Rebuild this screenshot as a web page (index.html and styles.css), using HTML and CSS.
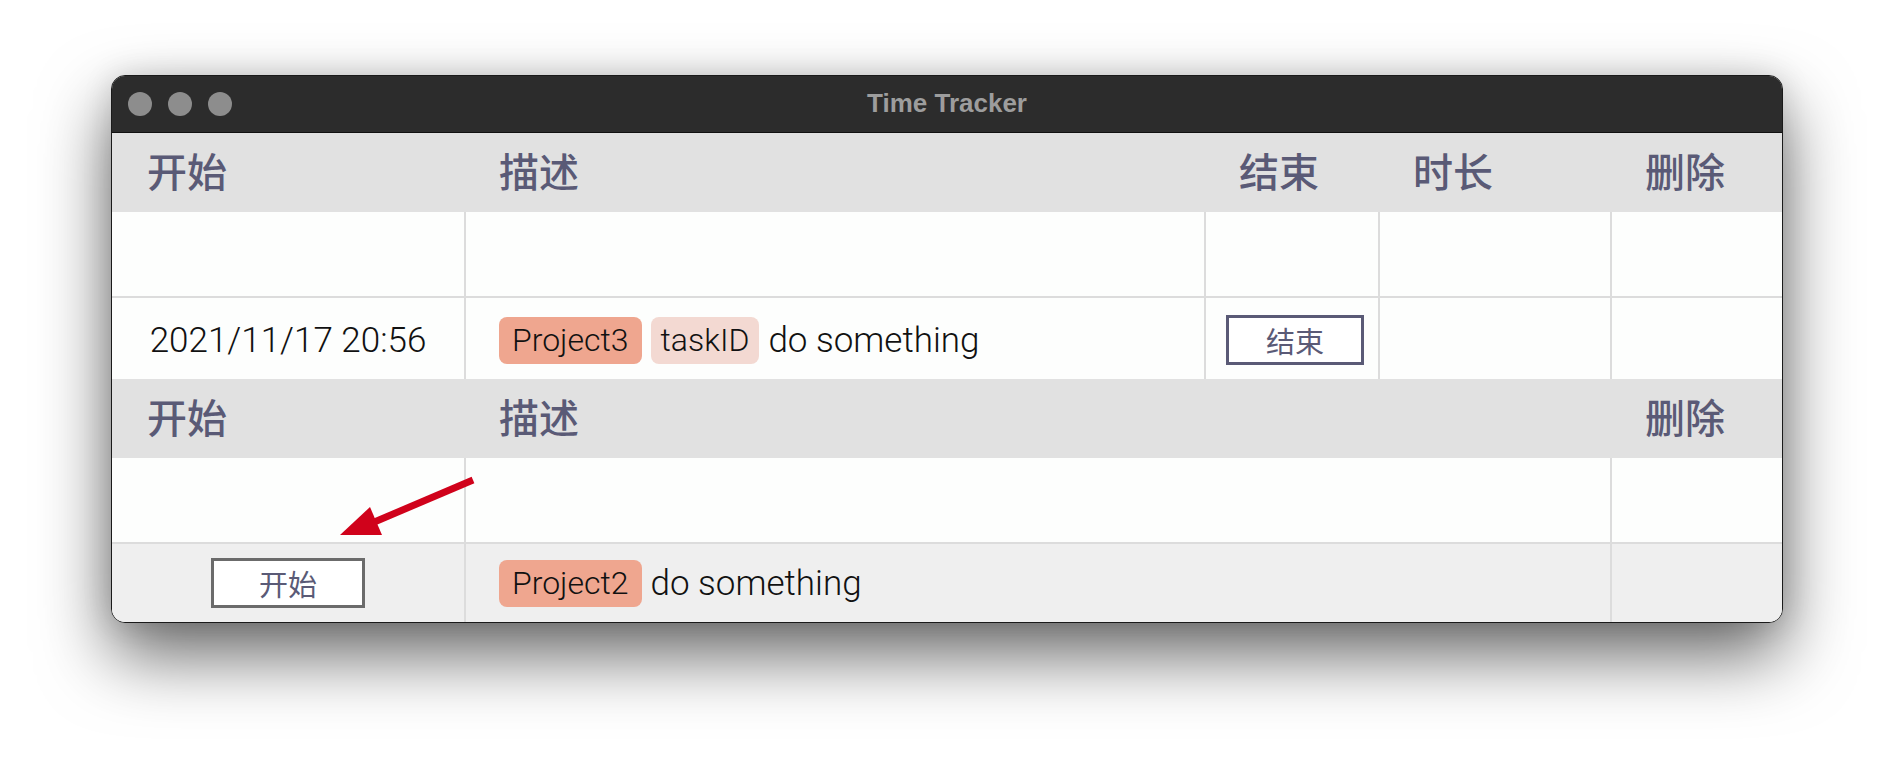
FILE: index.html
```html
<!DOCTYPE html>
<html lang="zh">
<head>
  <meta charset="UTF-8" />
  <title>Time Tracker</title>
  <link rel="stylesheet" href="styles.css">
</head>
<body>
  <div class="stage">
    <div class="window">
      <div class="titlebar">
        <div class="lights">
          <span class="light"></span>
          <span class="light"></span>
          <span class="light"></span>
        </div>
        <div class="title">Time Tracker</div>
        <div></div>
      </div>

      <!-- running tasks -->
      <div class="table running">
        <div class="row head">
          <div class="cell">开始</div>
          <div class="cell">描述</div>
          <div class="cell">结束</div>
          <div class="cell">时长</div>
          <div class="cell">删除</div>
        </div>
        <div class="row empty lined">
          <div class="cell"></div>
          <div class="cell"></div>
          <div class="cell"></div>
          <div class="cell"></div>
          <div class="cell"></div>
        </div>
        <div class="row item">
          <div class="cell center date">2021/11/17 20:56</div>
          <div class="cell desc">
            <span class="tag project">Project3</span>
            <span class="tag task">taskID</span>
            <span class="text">do something</span>
          </div>
          <div class="cell center"><button class="btn btn-stop">结束</button></div>
          <div class="cell"></div>
          <div class="cell"></div>
        </div>
      </div>

      <!-- planned tasks -->
      <div class="table planned">
        <div class="row head">
          <div class="cell">开始</div>
          <div class="cell">描述</div>
          <div class="cell">删除</div>
        </div>
        <div class="row empty lined">
          <div class="cell"></div>
          <div class="cell"></div>
          <div class="cell"></div>
        </div>
        <div class="row item last">
          <div class="cell center"><button class="btn btn-start">开始</button></div>
          <div class="cell desc">
            <span class="tag project">Project2</span>
            <span class="text">do something</span>
          </div>
          <div class="cell"></div>
        </div>
      </div>

      <svg class="arrow" width="150" height="72" viewBox="0 0 150 72">
        <line x1="141" y1="9" x2="40" y2="52" stroke="#d0021b" stroke-width="7" />
        <polygon points="8,64 38,36 50,64" fill="#d0021b" />
      </svg>
    </div>
  </div>
</body>
</html>
```

FILE: styles.css
```css
* {
  margin: 0;
  padding: 0;
  box-sizing: border-box;
}

html, body {
  overflow: hidden;
}

body {
  background: #ffffff;
  font-family: 'Roboto', 'Noto Sans CJK SC', sans-serif;
  color: #111;
  height: 770px;
}

.stage {
  padding: 75px 0 0 111px;
}

.window {
  position: relative;
  width: 1672px;
  border: 1px solid #1a1a1a;
  border-radius: 14px;
  overflow: hidden;
  background: #fdfefd;
  box-shadow: 0 32px 70px rgba(0, 0, 0, 0.6), 0 0 30px rgba(0, 0, 0, 0.12);
}

.titlebar {
  display: grid;
  grid-template-columns: 1fr auto 1fr;
  align-items: center;
  height: 57px;
  background: #2c2c2c;
  border-bottom: 1px solid #111;
}

.lights {
  display: flex;
  gap: 16px;
  padding-left: 16px;
}

.light {
  width: 24px;
  height: 24px;
  border-radius: 50%;
  background: #8d8d8d;
}

.title {
  font-family: 'Liberation Sans', sans-serif;
  font-weight: bold;
  font-size: 26px;
  color: #9d9d9d;
  padding-bottom: 2px;
}

.row {
  display: grid;
}

.running .row {
  grid-template-columns: 354px 740px 174px 232px 170px;
}

.planned .row {
  grid-template-columns: 354px 1146px 170px;
}

.cell {
  display: flex;
  align-items: center;
  padding-left: 33px;
  border-right: 2px solid #dcdcdc;
}

.cell:last-child {
  border-right: none;
}

.head {
  height: 79px;
  background: #e1e1e1;
}

.head .cell {
  border-right: none;
  font-family: 'Noto Sans CJK SC', sans-serif;
  font-weight: 500;
  font-size: 40px;
  color: #5a5a76;
  padding-bottom: 6px;
}

.head .cell:first-child {
  padding-left: 35px;
}

.empty {
  height: 86px;
}

.lined {
  border-bottom: 2px solid #dcdcdc;
}

.item {
  height: 81px;
}

.item.last {
  height: 78px;
  background: #efefef;
}

.center {
  justify-content: center;
  padding-left: 0;
}

.date {
  font-size: 35px;
  font-weight: 300;
  padding-top: 4px;
}

.desc {
  gap: 9px;
  padding-top: 3px;
}

.item.last .desc {
  padding-top: 0;
}

.tag {
  height: 47px;
  line-height: 47px;
  padding: 0 13px;
  border-radius: 8px;
  font-size: 32px;
  font-weight: 300;
}

.tag.project {
  background: #efa68f;
}

.tag.task {
  background: #f3d9d2;
  padding: 0 10px;
}

.text {
  font-size: 35px;
  font-weight: 300;
}

.btn {
  height: 50px;
  background: #fff;
  border: 3px solid #5a5a76;
  font-family: 'Noto Sans CJK SC', sans-serif;
  font-size: 29px;
  color: #5a5a76;
  line-height: 42px;
  margin-top: 3px;
}

.btn-stop {
  width: 138px;
  margin-left: 6px;
}

.btn-start {
  width: 154px;
  border-color: #6b6b6b;
  margin-top: 0;
}

.arrow {
  position: absolute;
  left: 220px;
  top: 395px;
}
```
